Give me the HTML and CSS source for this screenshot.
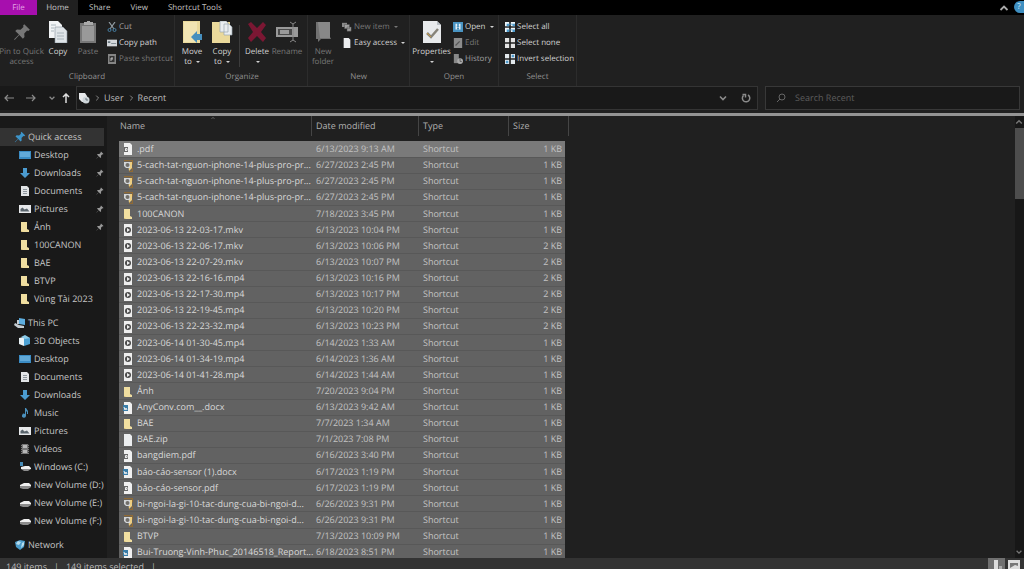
FILE: index.html
```html
<!DOCTYPE html>
<html lang="en">
<head>
<meta charset="utf-8">
<meta name="viewport" content="width=device-width, initial-scale=1">
<title>Recent</title>
<link rel="stylesheet" href="styles.css">
</head>
<body>
<svg class="defs" aria-hidden="true">
  <symbol id="pin" viewBox="0 0 16 16"><path fill="currentColor" d="M10 1l5 5-1.500 1-1-.3-2.500 2.600.2 3.200-1.400 1.400-3.200-3.300L1.500 15 1 14.500l4.300-4.200L2 7.200l1.500-1.400 3.200.2L9.300 3.500 9 2.300z"/></symbol>
  <symbol id="folder" viewBox="0 0 10 12"><path fill="#c9b06b" d="M1 1h6v10H1z"/><path fill="#f0dea0" d="M1 1h6v7l2 1v2H3L1 10z"/></symbol>
  <symbol id="desktop" viewBox="0 0 12 10"><path fill="#3b8cc4" d="M0 1h12v8H0z"/><path fill="#62a9d8" d="M1 2h10v5H1z"/></symbol>
  <symbol id="download" viewBox="0 0 10 12"><path fill="#4b9bd0" d="M3 1h4v5h3l-5 5-5-5h3z"/></symbol>
  <symbol id="doc" viewBox="0 0 10 12"><path fill="#e2e4e6" d="M1 1h6l2 2v8H1z"/><path stroke="#8d959c" d="M3 4.500h4M3 6.500h4M3 8.500h4"/></symbol>
  <symbol id="picture" viewBox="0 0 12 10"><path fill="#e6e8ea" d="M0 1h12v8H0z"/><path fill="#59646c" d="M1.500 7.500V5l2-1.500 2 2L8 4.500l2.500 3z"/></symbol>
  <symbol id="pc" viewBox="0 0 12 12"><path fill="#5daee0" d="M5 1l6 1v6L5 7z"/><path fill="#c4ccd2" d="M1 6l4 2 5 1v2L4 11 0 8zM3 3h2v4H3z"/></symbol>
  <symbol id="cube" viewBox="0 0 12 12"><path fill="#e8f1f5" d="M0 3l5-1v9l-5-2z"/><path fill="#4ca1d3" d="M5 2l6 1v6l-6 2z"/><path fill="#8dccea" d="M2 2l4-2 5 3-5 1z"/></symbol>
  <symbol id="music" viewBox="0 0 10 12"><path fill="#4b91bd" d="M5 1h1l2 3v3H7V5L6 4v5a2 2 0 1 1-1-2z"/></symbol>
  <symbol id="video" viewBox="0 0 10 12"><path fill="#777" d="M1 1h8v10H1z"/><path fill="#b7b7b7" d="M3 2h4v3H3zm0 5h4v3H3z"/><path stroke="#292929" stroke-dasharray="1 1" d="M1.500 1v10M8.500 1v10"/></symbol>
  <symbol id="drive" viewBox="0 0 12 10"><path fill="#f0f0f0" d="M1 5l4-2h5l2 2v1H1z"/><path fill="#8d8d8d" d="M1 6h11v1L9 9H4L1 8z"/></symbol>
  <symbol id="windrive" viewBox="0 0 12 10"><path fill="#468ab5" d="M1 0h3v4H1z"/><path fill="#f0f0f0" d="M2 5l4-1h4l2 2v1H2z"/><path fill="#8d8d8d" d="M2 7h10L9 9H5z"/></symbol>
  <symbol id="network" viewBox="0 0 12 12"><path fill="#4c9dcc" d="M1 3l5-2 5 1-1 6-4 3-4-3z"/><path fill="#b5dced" d="M4 2l3 1-2 3-3-1zm4 2l2-1v3L7 9z"/></symbol>
  <symbol id="pdf" viewBox="0 0 10 12"><path fill="#f0f0f0" d="M1 0h6l2 2v10H1z"/><path fill="#686868" d="M1 4h4v5H1z"/><path fill="none" stroke="#eee" d="M2.500 8V5.500H4v2H2.500"/></symbol>
  <symbol id="web" viewBox="0 0 10 12"><path fill="none" stroke="#8f6a35" stroke-width="1.200" d="M1 .6h8.400v4M9.400 8v3.400H6"/><path fill="#edcf83" d="M5 2h4v6l-3 3z"/><path fill="#d3d6d8" d="M1 2h6v6H3L1 6z"/><circle cx="4.500" cy="5" r="2" fill="#716e69"/></symbol>
  <symbol id="media" viewBox="0 0 10 12"><path fill="#eee" d="M1 0h8v12H1z"/><circle cx="5" cy="6" r="3" fill="#4b4b4b"/><path fill="#eee" d="M4 4l3 2-3 2z"/></symbol>
  <symbol id="word" viewBox="0 0 10 12"><path fill="#f0f0f0" d="M1 0h6l2 2v10H1z"/><path fill="#397ca7" d="M0 3h5v6H0z"/><path fill="none" stroke="#eee" d="M1 5l1 3 1-2 1 2"/></symbol>
  <symbol id="zip" viewBox="0 0 10 12"><path fill="#eceef0" d="M1 0h6l2 2v10H1z"/></symbol>
  <symbol id="pages" viewBox="0 0 20 22"><path fill="#f1f3f5" d="M1 0h9l4 4v13H1z"/><path fill="#dfe4e8" stroke="#8c969e" stroke-width=".6" d="M7 6h8l4 4v12H7z"/><path stroke="#9aa6ae" stroke-width=".8" d="M3 4h5M3 7h3M3 10h3M9 12h7M9 15h7M9 18h7"/></symbol>
  <symbol id="clip" viewBox="0 0 20 22"><path fill="#777" d="M2 2h16v20H2z"/><path fill="#999" d="M4 5h12v15H4z"/><path fill="#aaa" d="M6 1h3V0h3v1h3v3H6z"/></symbol>
  <symbol id="moveto" viewBox="0 0 20 22"><path fill="#e9d99c" d="M1 0h17v22H1z"/><path fill="#f1e4b3" d="M2 1h13v20H2z"/><path fill="#468fbe" d="M9 16l6-6v3h5v6h-5v3z"/></symbol>
  <symbol id="copyto" viewBox="0 0 20 22"><path fill="#ead99b" d="M0 1h18v21H0z"/><path fill="#e9edf0" stroke="#9ca8b0" stroke-width=".7" d="M8 0h6l2 2v9H8zM12 3h5l3 3v8h-8z"/></symbol>
  <symbol id="delete" viewBox="0 0 20 22"><path fill="#7b1733" d="M1 3l3-2 6 6 6-6 3 3-5 7 5 6-3 4-6-6-6 6-3-4 5-6z"/></symbol>
  <symbol id="rename" viewBox="0 0 22 22"><path fill="#999" d="M0 6h22v10H0z"/><path fill="#4a4a4a" d="M2 8h14v6H2z"/><path fill="#999" d="M4 9h9v4H4z"/><path stroke="#888" fill="none" d="M14 1l3 2v16l-3 2M20 1l-3 2M17 19l3 2"/></symbol>
  <symbol id="newfolder" viewBox="0 0 20 22"><path fill="#717171" d="M3 1h14v15l1 2H8l-3 3v-3H3z"/><path fill="#888" d="M5 1h12v16H7z"/></symbol>
  <symbol id="props" viewBox="0 0 20 22"><path fill="#e8eaec" d="M1 0h14l4 4v18H1z"/><path fill="#b9bfc4" d="M15 0v4h4z"/><path fill="none" stroke="#87847a" stroke-width="2.500" d="M5 12l4 4 7-8"/><path fill="none" stroke="#c99b45" d="M5 12l4 4"/></symbol>
  <symbol id="cut" viewBox="0 0 10 10"><path stroke="#929da4" stroke-width="1.200" d="M2 0l5 7M8 0L3 7"/><g fill="none" stroke="#477ea2"><circle cx="2.500" cy="8" r="1.500"/><circle cx="7.500" cy="8" r="1.500"/></g></symbol>
  <symbol id="path" viewBox="0 0 12 10"><path fill="#d4d8dc" d="M0 1h12v8H0z"/><path fill="#6a7780" d="M1 3h3v2H1zM5 5h6v1H5z"/></symbol>
  <symbol id="shortcut" viewBox="0 0 10 10"><path fill="#858585" d="M1 0h8v10H1z"/><path fill="#333" d="M2.500 2h5v6h-5z"/><path fill="none" stroke="#bbb" d="M4 7V4h2M5 6V4"/></symbol>
  <symbol id="newitem" viewBox="0 0 12 12"><path fill="#8a8a8a" d="M0 1h6v5H0z"/><path fill="#a1a1a1" stroke="#444" stroke-width=".5" d="M3 3h6v5H3zM6 6h5v5H6z"/></symbol>
  <symbol id="openapp" viewBox="0 0 12 12"><path fill="#4994c3" d="M0 0h12v12H0z"/><path fill="#e5f0f7" d="M3 2h2v3H3zM7 2h2v3H7zM3 5h1l2 2 2-2h1v4H3z"/><path fill="#2b79a9" d="M5 7h2v2H5z"/></symbol>
  <symbol id="edit" viewBox="0 0 12 12"><path fill="#8c8c8c" d="M1 0h10v12H1z"/><path stroke="#555" stroke-width="1.500" d="M3 9l5-5"/></symbol>
  <symbol id="history" viewBox="0 0 12 12"><path fill="#888" d="M1 0h6v11H1z"/><circle cx="8.500" cy="8.500" r="3.500" fill="#aaa"/><path fill="none" stroke="#555" d="M8.500 6v3h2"/></symbol>
  <symbol id="selall" viewBox="0 0 12 12"><path fill="#eef5f9" d="M0 0h5v5H0zm7 0h5v5H7zM0 7h5v5H0zm7 0h5v5H7z"/><path fill="#4f9ccd" d="M2 2h3v3H2zm7 0h3v3H9zM2 9h3v3H2zm7 0h3v3H9zM5 2h4v1H5zM5 9h4v1H5z"/></symbol>
  <symbol id="selnone" viewBox="0 0 12 12"><path fill="#e3e3e3" d="M0 0h5v5H0zm7 0h5v5H7zM0 7h5v5H0zm7 0h5v5H7z"/></symbol>
  <symbol id="selinv" viewBox="0 0 12 12"><path fill="#e3e9ed" d="M0 0h5v5H0zm7 0h5v5H7zM0 7h5v5H0zm7 0h5v5H7z"/><path fill="#4f9ccd" d="M8 1h3v3H8zM1 8h3v3H1z"/></symbol>
  <symbol id="left" viewBox="0 0 10 10"><path fill="none" stroke="currentColor" stroke-width="1.200" d="M10 5H1M4 2L1 5l3 3"/></symbol>
  <symbol id="right" viewBox="0 0 10 10"><path fill="none" stroke="currentColor" stroke-width="1.200" d="M0 5h9M6 2l3 3-3 3"/></symbol>
  <symbol id="up" viewBox="0 0 10 10"><path fill="none" stroke="currentColor" stroke-width="1.500" d="M5 10V1M2 4l3-3 3 3"/></symbol>
  <symbol id="chev" viewBox="0 0 10 10"><path fill="none" stroke="currentColor" stroke-width="1.600" d="M2 3.500l3 3 3-3"/></symbol>
  <symbol id="chevup" viewBox="0 0 10 10"><path fill="none" stroke="currentColor" stroke-width="1.800" d="M1.500 7L5 3.500 8.500 7"/></symbol>
  <symbol id="sep" viewBox="0 0 10 10"><path fill="none" stroke="currentColor" stroke-width="1.200" d="M4 2l3 3-3 3"/></symbol>
  <symbol id="refresh" viewBox="0 0 10 10"><path fill="none" stroke="currentColor" stroke-width="1.500" d="M7 2a3.700 3.700 0 1 1-4.500.5M1.500 1.500H4.500v3"/></symbol>
  <symbol id="search" viewBox="0 0 10 10"><circle cx="6" cy="4" r="3" fill="none" stroke="currentColor"/><path stroke="currentColor" d="M4 6L1 9"/></symbol>
  <symbol id="recent" viewBox="0 0 12 12"><path fill="#e8eaec" d="M1 1h6l2 3v6H4L1 7z"/><circle cx="8" cy="8" r="3.500" fill="#cfd6da"/><path fill="none" stroke="#6b777e" d="M8 6v2h2"/></symbol>
</svg>

<div class="app">
  <nav class="tabs" aria-label="Ribbon tabs">
    <button class="tab file">File</button>
    <button class="tab active">Home</button>
    <button class="tab share">Share</button>
    <button class="tab view">View</button>
    <button class="tab">Shortcut Tools</button>
    <span class="spacer"></span>
    <button class="corner" aria-label="Collapse ribbon"><svg class="i10"><use href="#chevup"/></svg></button>
    <button class="help" aria-label="Help">?</button>
  </nav>

  <div class="ribbon">
    <section class="group clipboard">
      <div class="tools">
        <button class="big wide dim"><svg class="i22 inset"><use href="#pin"/></svg><span>Pin to Quick<br>access</span></button>
        <button class="big narrow"><svg class="i22"><use href="#pages"/></svg><span>Copy</span></button>
        <button class="big narrow dim"><svg class="i22"><use href="#clip"/></svg><span>Paste</span></button>
        <div class="stack">
          <button class="small mid"><svg class="i10"><use href="#cut"/></svg>Cut</button>
          <button class="small"><svg class="i10"><use href="#path"/></svg>Copy path</button>
          <button class="small dim"><svg class="i10"><use href="#shortcut"/></svg>Paste shortcut</button>
        </div>
      </div>
      <h2>Clipboard</h2>
    </section>
    <section class="group organize">
      <div class="tools">
        <button class="big narrow"><svg class="i22"><use href="#moveto"/></svg><span>Move<br>to <i class="caret"></i></span></button>
        <button class="big narrow"><svg class="i22"><use href="#copyto"/></svg><span>Copy<br>to <i class="caret"></i></span></button>
        <span class="rule"></span>
        <button class="big narrow"><svg class="i22"><use href="#delete"/></svg><span>Delete<br><i class="caret"></i></span></button>
        <button class="big narrow dim"><svg class="i22"><use href="#rename"/></svg><span>Rename</span></button>
      </div>
      <h2>Organize</h2>
    </section>
    <section class="group new">
      <div class="tools">
        <button class="big narrow dim"><svg class="i22"><use href="#newfolder"/></svg><span>New<br>folder</span></button>
        <div class="stack">
          <button class="small dim"><svg class="i10"><use href="#newitem"/></svg>New item <i class="caret"></i></button>
          <button class="small"><svg class="i10"><use href="#zip"/></svg>Easy access <i class="caret"></i></button>
        </div>
      </div>
      <h2>New</h2>
    </section>
    <section class="group open">
      <div class="tools">
        <button class="big wide"><svg class="i22"><use href="#props"/></svg><span>Properties<br><i class="caret"></i></span></button>
        <div class="stack">
          <button class="small"><svg class="i10"><use href="#openapp"/></svg>Open <i class="caret"></i></button>
          <button class="small dim"><svg class="i10"><use href="#edit"/></svg>Edit</button>
          <button class="small mid"><svg class="i10"><use href="#history"/></svg>History</button>
        </div>
      </div>
      <h2>Open</h2>
    </section>
    <section class="group select">
      <div class="tools">
        <div class="stack">
          <button class="small"><svg class="i10"><use href="#selall"/></svg>Select all</button>
          <button class="small"><svg class="i10"><use href="#selnone"/></svg>Select none</button>
          <button class="small"><svg class="i10"><use href="#selinv"/></svg>Invert selection</button>
        </div>
      </div>
      <h2>Select</h2>
    </section>
  </div>

  <div class="location">
    <div class="history">
      <button aria-label="Back"><svg class="i10"><use href="#left"/></svg></button>
      <button aria-label="Forward"><svg class="i10"><use href="#right"/></svg></button>
      <button class="tiny" aria-label="Recent locations"><svg class="i8"><use href="#chev"/></svg></button>
      <button class="tiny bright" aria-label="Up"><svg class="i10"><use href="#up"/></svg></button>
    </div>
    <div class="address">
      <svg class="i12"><use href="#recent"/></svg>
      <svg class="i8"><use href="#sep"/></svg><a href="#user">User</a>
      <svg class="i8"><use href="#sep"/></svg><a href="#recent-items">Recent</a>
      <span class="spacer"></span>
      <button aria-label="Previous locations"><svg class="i10"><use href="#chev"/></svg></button>
      <button aria-label="Refresh"><svg class="i10"><use href="#refresh"/></svg></button>
    </div>
    <label class="search"><svg class="i10"><use href="#search"/></svg><input type="text" placeholder="Search Recent" aria-label="Search Recent"></label>
  </div>

  <div class="main">
    <nav class="side" aria-label="Folders">
      <a class="top current" href="#q"><svg class="i12 blue"><use href="#pin"/></svg>Quick access</a>
      <a href="#1"><svg class="i12"><use href="#desktop"/></svg><span>Desktop</span><svg class="i8"><use href="#pin"/></svg></a>
      <a href="#2"><svg class="i12"><use href="#download"/></svg><span>Downloads</span><svg class="i8"><use href="#pin"/></svg></a>
      <a href="#3"><svg class="i12"><use href="#doc"/></svg><span>Documents</span><svg class="i8"><use href="#pin"/></svg></a>
      <a href="#4"><svg class="i12"><use href="#picture"/></svg><span>Pictures</span><svg class="i8"><use href="#pin"/></svg></a>
      <a href="#5"><svg class="i12"><use href="#folder"/></svg><span>Ảnh</span><svg class="i8"><use href="#pin"/></svg></a>
      <a href="#6"><svg class="i12"><use href="#folder"/></svg>100CANON</a>
      <a href="#7"><svg class="i12"><use href="#folder"/></svg>BAE</a>
      <a href="#8"><svg class="i12"><use href="#folder"/></svg>BTVP</a>
      <a href="#9"><svg class="i12"><use href="#folder"/></svg>Vũng Tài 2023</a>
      <a class="top next" href="#pc-root"><svg class="i12"><use href="#pc"/></svg>This PC</a>
      <a href="#10"><svg class="i12"><use href="#cube"/></svg>3D Objects</a>
      <a href="#11"><svg class="i12"><use href="#desktop"/></svg>Desktop</a>
      <a href="#12"><svg class="i12"><use href="#doc"/></svg>Documents</a>
      <a href="#13"><svg class="i12"><use href="#download"/></svg>Downloads</a>
      <a href="#14"><svg class="i12"><use href="#music"/></svg>Music</a>
      <a href="#15"><svg class="i12"><use href="#picture"/></svg>Pictures</a>
      <a href="#16"><svg class="i12"><use href="#video"/></svg>Videos</a>
      <a href="#17"><svg class="i12"><use href="#windrive"/></svg>Windows (C:)</a>
      <a href="#18"><svg class="i12"><use href="#drive"/></svg>New Volume (D:)</a>
      <a href="#19"><svg class="i12"><use href="#drive"/></svg>New Volume (E:)</a>
      <a href="#20"><svg class="i12"><use href="#drive"/></svg>New Volume (F:)</a>
      <a class="top next" href="#net"><svg class="i12"><use href="#network"/></svg>Network</a>
    </nav>

    <div class="files">
      <div class="heads">
        <button class="h-name">Name<svg class="sort"><use href="#chevup"/></svg></button>
        <button class="h-date">Date modified</button>
        <button class="h-type">Type</button>
        <button class="h-size">Size</button>
      </div>
      <table>
        <colgroup><col class="c-name"><col class="c-date"><col class="c-type"><col class="c-size"></colgroup>
        <tbody>
        <tr><td><svg><use href="#pdf"/></svg>.pdf</td><td>6/13/2023 9:13 AM</td><td>Shortcut</td><td>1 KB</td></tr>
        <tr><td><svg><use href="#web"/></svg>5-cach-tat-nguon-iphone-14-plus-pro-pr...</td><td>6/27/2023 2:45 PM</td><td>Shortcut</td><td>1 KB</td></tr>
        <tr><td><svg><use href="#web"/></svg>5-cach-tat-nguon-iphone-14-plus-pro-pr...</td><td>6/27/2023 2:45 PM</td><td>Shortcut</td><td>1 KB</td></tr>
        <tr><td><svg><use href="#web"/></svg>5-cach-tat-nguon-iphone-14-plus-pro-pr...</td><td>6/27/2023 2:45 PM</td><td>Shortcut</td><td>1 KB</td></tr>
        <tr><td><svg><use href="#folder"/></svg>100CANON</td><td>7/18/2023 3:45 PM</td><td>Shortcut</td><td>1 KB</td></tr>
        <tr><td><svg><use href="#media"/></svg>2023-06-13 22-03-17.mkv</td><td>6/13/2023 10:04 PM</td><td>Shortcut</td><td>1 KB</td></tr>
        <tr><td><svg><use href="#media"/></svg>2023-06-13 22-06-17.mkv</td><td>6/13/2023 10:06 PM</td><td>Shortcut</td><td>2 KB</td></tr>
        <tr><td><svg><use href="#media"/></svg>2023-06-13 22-07-29.mkv</td><td>6/13/2023 10:07 PM</td><td>Shortcut</td><td>2 KB</td></tr>
        <tr><td><svg><use href="#media"/></svg>2023-06-13 22-16-16.mp4</td><td>6/13/2023 10:16 PM</td><td>Shortcut</td><td>2 KB</td></tr>
        <tr><td><svg><use href="#media"/></svg>2023-06-13 22-17-30.mp4</td><td>6/13/2023 10:17 PM</td><td>Shortcut</td><td>2 KB</td></tr>
        <tr><td><svg><use href="#media"/></svg>2023-06-13 22-19-45.mp4</td><td>6/13/2023 10:20 PM</td><td>Shortcut</td><td>2 KB</td></tr>
        <tr><td><svg><use href="#media"/></svg>2023-06-13 22-23-32.mp4</td><td>6/13/2023 10:23 PM</td><td>Shortcut</td><td>2 KB</td></tr>
        <tr><td><svg><use href="#media"/></svg>2023-06-14 01-30-45.mp4</td><td>6/14/2023 1:33 AM</td><td>Shortcut</td><td>1 KB</td></tr>
        <tr><td><svg><use href="#media"/></svg>2023-06-14 01-34-19.mp4</td><td>6/14/2023 1:36 AM</td><td>Shortcut</td><td>1 KB</td></tr>
        <tr><td><svg><use href="#media"/></svg>2023-06-14 01-41-28.mp4</td><td>6/14/2023 1:44 AM</td><td>Shortcut</td><td>1 KB</td></tr>
        <tr><td><svg><use href="#folder"/></svg>Ảnh</td><td>7/20/2023 9:04 PM</td><td>Shortcut</td><td>1 KB</td></tr>
        <tr><td><svg><use href="#word"/></svg>AnyConv.com__.docx</td><td>6/13/2023 9:42 AM</td><td>Shortcut</td><td>1 KB</td></tr>
        <tr><td><svg><use href="#folder"/></svg>BAE</td><td>7/7/2023 1:34 AM</td><td>Shortcut</td><td>1 KB</td></tr>
        <tr><td><svg><use href="#zip"/></svg>BAE.zip</td><td>7/1/2023 7:08 PM</td><td>Shortcut</td><td>1 KB</td></tr>
        <tr><td><svg><use href="#pdf"/></svg>bangdiem.pdf</td><td>6/16/2023 3:40 PM</td><td>Shortcut</td><td>1 KB</td></tr>
        <tr><td><svg><use href="#word"/></svg>báo-cáo-sensor (1).docx</td><td>6/17/2023 1:19 PM</td><td>Shortcut</td><td>1 KB</td></tr>
        <tr><td><svg><use href="#pdf"/></svg>báo-cáo-sensor.pdf</td><td>6/17/2023 1:19 PM</td><td>Shortcut</td><td>1 KB</td></tr>
        <tr><td><svg><use href="#web"/></svg>bi-ngoi-la-gi-10-tac-dung-cua-bi-ngoi-d...</td><td>6/26/2023 9:31 PM</td><td>Shortcut</td><td>1 KB</td></tr>
        <tr><td><svg><use href="#web"/></svg>bi-ngoi-la-gi-10-tac-dung-cua-bi-ngoi-d...</td><td>6/26/2023 9:31 PM</td><td>Shortcut</td><td>1 KB</td></tr>
        <tr><td><svg><use href="#folder"/></svg>BTVP</td><td>7/13/2023 10:09 PM</td><td>Shortcut</td><td>1 KB</td></tr>
        <tr><td><svg><use href="#word"/></svg>Bui-Truong-Vinh-Phuc_20146518_Report...</td><td>6/18/2023 8:51 PM</td><td>Shortcut</td><td>1 KB</td></tr>
        </tbody>
      </table>
    </div>

    <div class="scroll">
      <button aria-label="Scroll up"><svg class="i8"><use href="#chevup"/></svg></button>
      <div class="track"><div class="thumb"></div></div>
      <button aria-label="Scroll down"><svg class="i8"><use href="#chev"/></svg></button>
    </div>
  </div>

  <footer class="status">
    <span>149 items</span><span class="bar">|</span><span>149 items selected</span><span class="bar">|</span>
    <span class="spacer"></span>
    <button class="on" aria-label="Details view"><svg class="i12" viewBox="0 0 12 12"><path fill="#ddd" d="M3 0h4v12H3z"/><path fill="#aaa" d="M8 6h3v6H8z"/></svg></button>
    <button aria-label="Thumbnail view"><svg class="i12" viewBox="0 0 12 12"><path fill="#ddd" d="M0 0h12v12H0z"/><path fill="#777" d="M2 3h8v3L7 5 2 8z"/></svg></button>
  </footer>
</div>
</body>
</html>
```
FILE: styles.css
```css
* { box-sizing: border-box; }

body {
  margin: 0;
  overflow: hidden;
  background: #202020;
  color: #d2d2d2;
  font: 9px/16px "Open Sans", "Noto Sans", sans-serif;
  text-rendering: geometricPrecision;
}

button {
  display: flex;
  align-items: center;
  padding: 0;
  border: 0;
  background: none;
  color: inherit;
  font: inherit;
  text-rendering: inherit;
}

a { color: inherit; text-decoration: none; }
svg { flex: none; }

.defs { position: absolute; width: 0; height: 0; }
.spacer { flex: 1; }
.i8 { width: 8px; height: 8px; }
.i10 { width: 10px; height: 10px; }
.i12 { width: 12px; height: 12px; }
.i22 { width: 22px; height: 22px; }
.inset { padding: 2px; }

.app { display: flex; flex-direction: column; height: 100vh; }

/* Tabs */
.tabs { display: flex; flex: none; height: 15px; background: #000; font-size: 8px; color: #c4c4c4; }
.tab { justify-content: center; }
.tab.file { width: 37px; background: #a70fae; color: #e3a6e6; }
.tab.active { width: 41px; margin-right: 11px; background: #202020; }
.tab.share { margin-right: 20px; }
.tab.view { margin-right: 20px; }
.corner { margin-right: 5px; color: #aaa; }
.help { justify-content: center; width: 10px; height: 12px; margin: 1px 0; border-radius: 6px 0 0 6px; background: #3f8fc1; color: #d9effa; }

/* Ribbon */
.ribbon { display: flex; flex: none; height: 71px; font-size: 8px; line-height: 10px; }
.group {
  display: flex;
  flex-direction: column;
  justify-content: space-between;
  padding: 4px 0;
  border-right: 1px solid #2c2c2c;
}
.group h2 { margin: 0; font-size: 8px; font-weight: 400; text-align: center; color: #909090; }
.tools { display: flex; }
.clipboard { width: 175px; }
.organize { width: 133px; padding-left: 2px; }
.new { width: 102px; }
.open { width: 89px; }
.select { width: 78px; }
.big { flex-direction: column; justify-content: flex-start; gap: 4px; height: 50px; padding-top: 2px; white-space: nowrap; }
.wide { width: 43px; }
.narrow { width: 30px; }
.stack { display: flex; flex-direction: column; padding-left: 4px; }
.open .stack { padding-left: 0; }
.select .stack { padding-left: 6px; }
.small { gap: 2px; height: 16px; white-space: nowrap; }
.dim { color: #777; }
.mid { color: #a0a0a0; }
.rule { width: 1px; margin: 6px 2px 2px; background: #3c3c3c; }
.caret {
  display: inline-block;
  margin-left: 2px;
  border: 2px solid transparent;
  border-top-color: currentColor;
  border-bottom: 0;
  vertical-align: middle;
}

/* Location row */
.location {
  display: flex;
  flex: none;
  height: 30px;
  padding: 0 4px 3px 0;
  border-bottom: 3px solid #949494;
  color: #8b8b8b;
}
.history { display: flex; flex: none; width: 76px; padding-left: 4px; background: #191919; }
.history button { justify-content: center; width: 12px; margin-right: 11px; }
.history .tiny { width: 10px; margin-right: 5px; }
.history .bright { color: #ddd; }
.address { display: flex; flex: 1; align-items: center; gap: 3px; padding: 0 6px 0 1px; border: 1px solid #343434; background: #191919; }
.address a { color: #bcbcbc; }
.address button { margin-left: 10px; }
.search { display: flex; flex: none; width: 25%; align-items: center; gap: 9px; margin-left: 7px; padding-left: 10px; border: 1px solid #383838; background: #191919; color: #666; }
.search input { flex: 1; min-width: 0; padding: 0; border: 0; outline: 0; background: none; color: #bbb; font: inherit; text-rendering: inherit; }
.search input::placeholder { color: #5d5d5d; opacity: 1; }

/* Body */
.main { display: flex; flex: 1; min-height: 0; }
.side { width: 107px; padding-top: 12px; overflow: hidden; background: #191919; color: #c6c6c6; }
.side a { display: flex; align-items: center; gap: 3px; height: 18px; margin-right: 3px; padding-left: 19px; white-space: nowrap; }
.side a span { flex: 1; }
.side a > .i8 { color: #999; }
.side .top { gap: 2px; padding-left: 14px; }
.side .current { background: #333; }
.side .next { margin-top: 6px; }
.blue { color: #3d94c9; }

.files { display: flex; flex: 1; flex-direction: column; min-width: 0; padding-left: 12px; overflow: hidden; }
.heads { display: flex; flex: none; height: 20px; margin-bottom: 5px; color: #b0b0b0; }
.heads button { padding-left: 4px; border-right: 1px solid #454545; }
.heads .h-name { position: relative; width: 193px; padding-left: 1px; }
.h-date { width: 107px; }
.h-type { width: 90px; }
.h-size { width: 60px; }
.sort { position: absolute; top: 0; left: 91px; width: 6px; height: 4px; color: #888; }

table { flex: 1; width: 446px; margin-bottom: -3px; border-collapse: collapse; table-layout: fixed; background: #626262; line-height: 14px; }
.c-name { width: 193px; }
.c-date { width: 107px; }
.c-type { width: 90px; }
.c-size { width: 56px; }
td { height: 16px; padding: 0 0 0 4px; border-bottom: 1px solid #585858; color: #c2c2c2; white-space: nowrap; }
td:first-child { color: #d8d8d8; }
td:last-child { padding-right: 3px; text-align: right; }
tr:first-child td { background: #7a7a7a; }
td svg { width: 10px; height: 12px; margin-right: 4px; vertical-align: middle; }

.scroll { display: flex; flex-direction: column; width: 9px; background: #171717; color: #777; }
.scroll button { height: 12px; }
.track { flex: 1; }
.thumb { height: 17%; background: #4d4d4d; }

/* Status bar */
.status { position: relative; display: flex; flex: none; height: 11px; padding: 0 3px 0 6px; overflow: hidden; background: #333; color: #bbb; line-height: 18px; }
.status .bar { margin: 0 7px; }
.status button { justify-content: center; width: 14px; padding-top: 4px; }
.status .on { width: 17px; margin-right: 2px; background: #707070; }
```
